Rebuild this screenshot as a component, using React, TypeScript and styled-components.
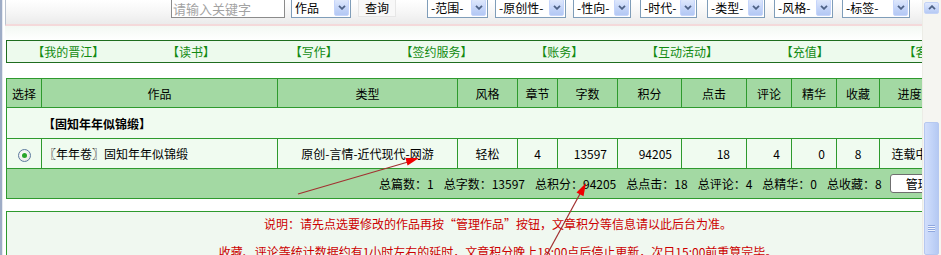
import React from 'react'
import styled, { createGlobalStyle } from 'styled-components'

const GlobalStyle = createGlobalStyle`
  html, body { margin: 0; padding: 0; background: #fff; overflow: hidden; }
  body {
    font-family: "Noto Sans CJK SC", "Liberation Sans", sans-serif;
    font-size: 12px;
    color: #000;
  }
`

const Viewport = styled.div`
  position: relative;
  display: flex;
  width: 941px;
  height: 255px;
  overflow: hidden;
  background: #fff;
`

const FrameEdge = styled.div`
  flex: none;
  width: 2px;
  background: #9eacc6;
  border-right: 1px solid #e6e9ef;
`

const Content = styled.div`
  flex: 1;
  min-width: 0;
  overflow: hidden;
`

const Page = styled.div`
  width: 990px;
  padding-left: 2px;
`

const TopBar = styled.div`
  height: 24px;
  border-left: 1px solid #b9c2cf;
  border-bottom: 2px solid #f4d9da;
  background: linear-gradient(#ffffff, #f6f6f6 50%, #ebebeb);
  padding-left: 165px;
  display: flex;
  align-items: flex-start;
`

const ToolRow = styled.div`
  display: flex;
  align-items: flex-start;
  margin-top: -3px;
`

const SearchBox = styled.div`
  box-sizing: border-box;
  width: 114px;
  height: 21px;
  border: 1px solid #8b8b8b;
  background: #fff;
  color: #a3a3a3;
  font-size: 13px;
  line-height: 21px;
  padding-left: 1px;
  white-space: nowrap;
  overflow: hidden;
`

const SelectBox = styled.div<{ $w: number; $ml: number }>`
  box-sizing: border-box;
  width: ${p => p.$w}px;
  height: 21px;
  margin-left: ${p => p.$ml}px;
  border: 1px solid #7f9db9;
  background: #fff;
  display: flex;
  align-items: center;
  justify-content: space-between;
  padding: 0 1px 0 3px;
  white-space: nowrap;
`

const SelectArrow = styled.span`
  box-sizing: border-box;
  width: 15px;
  height: 17px;
  border: 1px solid #c6d5fb;
  border-radius: 2px;
  background: linear-gradient(#dfe8fc, #c2d3f8 60%, #b3c8f4);
  display: flex;
  align-items: center;
  justify-content: center;
`

const QueryButton = styled.div`
  box-sizing: border-box;
  width: 38px;
  height: 20px;
  margin-left: 7px;
  border: 1px solid #e6e6e6;
  background: #f8f8f8;
  text-align: center;
  line-height: 20px;
`

const GapStrip = styled.div`
  height: 14px;
  background: linear-gradient(#f3f8f3, #ffffff);
`

const NavBar = styled.div`
  box-sizing: border-box;
  width: 984px;
  height: 23px;
  margin-left: 1px;
  border: 1px solid #1f6d1f;
  background: #edfaed;
  display: grid;
  grid-template-columns: repeat(8, 1fr);
  align-items: center;
  color: #118a11;
`

const NavItem = styled.span`
  text-align: center;
  white-space: nowrap;
`

const Table = styled.table`
  width: 984px;
  margin: 15px 0 0 1px;
  border-collapse: collapse;
  table-layout: fixed;
  border: 1px solid #2e9a2e;
`

const HeadCell = styled.th`
  height: 28px;
  padding: 0;
  border: 1px solid #2e9a2e;
  background: #a3d9a3;
  font-weight: normal;
  text-align: center;
  white-space: nowrap;
`

const GroupCell = styled.td`
  height: 30px;
  padding: 0 0 0 36px;
  background: #f0fbf0;
  font-weight: bold;
  white-space: nowrap;
`

const Cell = styled.td<{ $align?: string; $pr?: number; $pl?: number }>`
  height: 29px;
  padding: 0 ${p => p.$pr ?? 0}px 0 ${p => p.$pl ?? 0}px;
  border: 1px solid #2e9a2e;
  background: #f0fbf0;
  text-align: ${p => p.$align ?? 'center'};
  white-space: nowrap;
  overflow: hidden;
`

const SummaryCell = styled.td`
  height: 29px;
  padding: 0 0 0 372px;
  border: 1px solid #2e9a2e;
  background: #a3d9a3;
`

const SummaryRow = styled.div`
  display: flex;
  align-items: center;
  gap: 10px;
  white-space: nowrap;
`

const ManageButton = styled.div`
  box-sizing: border-box;
  flex: none;
  width: 80px;
  height: 19px;
  margin-left: -2px;
  border: 1px solid #6f6f6f;
  border-radius: 3px;
  background: #fff;
  text-align: center;
  line-height: 17px;
`

const Radio = styled.span`
  display: inline-block;
  position: relative;
  box-sizing: border-box;
  width: 13px;
  height: 13px;
  vertical-align: middle;
  border: 1px solid #5d7b9f;
  border-radius: 50%;
  background: radial-gradient(circle at 40% 40%, #ffffff, #e2e2dc);

  &::after {
    content: '';
    position: absolute;
    left: 3px;
    top: 3px;
    width: 5px;
    height: 5px;
    border-radius: 50%;
    background: #2aa52a;
  }
`

const Notice = styled.div`
  box-sizing: border-box;
  width: 984px;
  height: 60px;
  margin: 12px 0 0 1px;
  padding-top: 4px;
  border: 1px solid #2e9a2e;
  background: #f0f8f0;
  color: #cc0000;
  text-align: center;
  white-space: nowrap;
`

const NoticeLine = styled.p`
  margin: 0 0 12px;
  line-height: 16px;
`

const ScrollBar = styled.div`
  flex: none;
  width: 19px;
  background: #f5f5f1;
  border-left: 1px solid #ecece6;
  box-sizing: border-box;
  display: flex;
  flex-direction: column;
  align-items: flex-start;
  padding-left: 1px;
`

const ScrollUp = styled.div`
  box-sizing: border-box;
  width: 15px;
  height: 17px;
  margin-top: 2px;
  border: 1px solid #c4d3f6;
  border-radius: 2px;
  background: linear-gradient(#e0e9fd, #c6d6f9 60%, #b6caf4);
  display: flex;
  align-items: center;
  justify-content: center;
`

const ScrollThumb = styled.div`
  box-sizing: border-box;
  width: 15px;
  height: 200px;
  margin-top: 108px;
  border: 1px solid #b6c8f0;
  border-radius: 2px;
  background: linear-gradient(to right, #d2defb, #c3d4f8 50%, #b5c9f3);
  display: flex;
  justify-content: center;
`

const Grip = styled.div`
  width: 7px;
  height: 7px;
  margin-top: 102px;
  background: repeating-linear-gradient(#8fa7df 0 1px, #eef3fd 1px 2px);
`

const Overlay = styled.svg`
  position: absolute;
  left: 0;
  top: 0;
  pointer-events: none;
`

const Chevron = ({ up }: { up?: boolean }) => (
  <svg width="8" height="5" viewBox="0 0 8 5">
    <path
      d={up ? 'M1 4.2 L4 1.2 L7 4.2' : 'M1 0.8 L4 3.8 L7 0.8'}
      fill="none"
      stroke="#4d6185"
      strokeWidth="1.8"
    />
  </svg>
)

const selects = [
  { label: '-范围-', w: 61, ml: 31 },
  { label: '-原创性-', w: 71, ml: 7 },
  { label: '-性向-', w: 58, ml: 7 },
  { label: '-时代-', w: 57, ml: 9 },
  { label: '-类型-', w: 58, ml: 10 },
  { label: '-风格-', w: 59, ml: 9 },
  { label: '-标签-', w: 68, ml: 9 },
]

const navItems = ['【我的晋江】', '【读书】', '【写作】', '【签约服务】', '【账务】', '【互动活动】', '【充值】', '【客服】']

const columns = [
  { label: '选择', w: 35 },
  { label: '作品', w: 236 },
  { label: '类型', w: 180 },
  { label: '风格', w: 60 },
  { label: '章节', w: 40 },
  { label: '字数', w: 60 },
  { label: '积分', w: 64 },
  { label: '点击', w: 65 },
  { label: '评论', w: 45 },
  { label: '精华', w: 45 },
  { label: '收藏', w: 43 },
  { label: '进度', w: 60 },
  { label: '操作', w: 51 },
]

const totals = ['总篇数：1', '总字数：13597', '总积分：94205', '总点击：18', '总评论：4', '总精华：0', '总收藏：8']

export default function App() {
  return (
    <Viewport>
      <GlobalStyle />
      <FrameEdge />
      <Content>
        <Page>
          <TopBar>
            <ToolRow>
              <SearchBox>请输入关键字</SearchBox>
              <SelectBox $w={60} $ml={6}>
                作品
                <SelectArrow><Chevron /></SelectArrow>
              </SelectBox>
              <QueryButton>查询</QueryButton>
              {selects.map(s => (
                <SelectBox key={s.label} $w={s.w} $ml={s.ml}>
                  {s.label}
                  <SelectArrow><Chevron /></SelectArrow>
                </SelectBox>
              ))}
            </ToolRow>
          </TopBar>
          <GapStrip />
          <NavBar>
            {navItems.map(n => <NavItem key={n}>{n}</NavItem>)}
          </NavBar>

          <Table>
            <colgroup>
              {columns.map(c => <col key={c.label} style={{ width: c.w }} />)}
            </colgroup>
            <thead>
              <tr>
                {columns.map(c => <HeadCell key={c.label}>{c.label}</HeadCell>)}
              </tr>
            </thead>
            <tbody>
              <tr>
                <GroupCell colSpan={columns.length}>【固知年年似锦缎】</GroupCell>
              </tr>
              <tr>
                <Cell><Radio /></Cell>
                <Cell $align="left" $pl={2}>〖年年卷〗固知年年似锦缎</Cell>
                <Cell>原创-言情-近代现代-网游</Cell>
                <Cell>轻松</Cell>
                <Cell>4</Cell>
                <Cell $align="right" $pr={10}>13597</Cell>
                <Cell $align="right" $pr={9}>94205</Cell>
                <Cell $align="right" $pr={16}>18</Cell>
                <Cell $align="right" $pr={11}>4</Cell>
                <Cell $align="right" $pr={11}>0</Cell>
                <Cell>8</Cell>
                <Cell>连载中</Cell>
                <Cell>否</Cell>
              </tr>
              <tr>
                <SummaryCell colSpan={columns.length}>
                  <SummaryRow>
                    {totals.map(t => <span key={t}>{t}</span>)}
                    <ManageButton>管理作品</ManageButton>
                  </SummaryRow>
                </SummaryCell>
              </tr>
            </tbody>
          </Table>

          <Notice>
            <NoticeLine>说明：请先点选要修改的作品再按“管理作品”按钮，文章积分等信息请以此后台为准。</NoticeLine>
            <NoticeLine>收藏、评论等统计数据约有1小时左右的延时，文章积分晚上18:00点后停止更新，次日15:00前重算完毕。</NoticeLine>
          </Notice>
        </Page>
      </Content>
      <ScrollBar>
        <ScrollUp><Chevron up /></ScrollUp>
        <ScrollThumb><Grip /></ScrollThumb>
      </ScrollBar>

      <Overlay width="941" height="255" viewBox="0 0 941 255">
        <line x1="298" y1="194" x2="408" y2="162" stroke="#a23030" strokeWidth="1.2" />
        <polygon points="419,158 405.4,157.9 407.6,165.5" fill="#f00000" />
        <line x1="544" y1="260" x2="581" y2="192" stroke="#a23030" strokeWidth="1.2" />
        <polygon points="586,183 583.5,196.3 576.5,192.6" fill="#f00000" />
      </Overlay>
    </Viewport>
  )
}
